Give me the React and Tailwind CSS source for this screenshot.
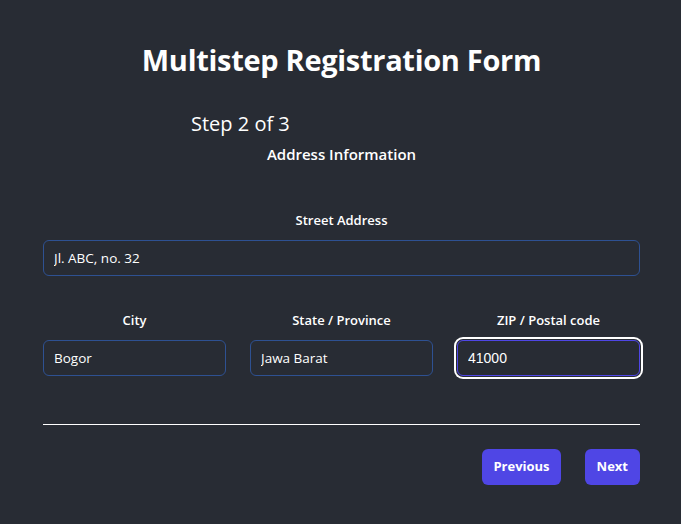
import React, { useState } from "react";

export default function App() {
  const [form, setForm] = useState({
    street: "Jl. ABC, no. 32",
    city: "Bogor",
    state: "Jawa Barat",
    zip: "41000",
  });

  const handleChange = (e) => {
    setForm({ ...form, [e.target.name]: e.target.value });
  };

  return (
    <div
      className="min-h-screen bg-[#282c34] text-white"
      style={{ fontFamily: '"Open Sans", "Noto Sans", sans-serif' }}
    >
      <div className="ml-[43px] mr-[41px] pt-[40px]">
        <h1 className="text-center text-[29px] font-bold leading-[40px] tracking-[-0.3px]">
          Multistep Registration Form
        </h1>

        <div className="mt-[31px] pl-[148px] text-[20px] leading-[26px]">Step 2 of 3</div>
        <h2 className="mt-[7px] text-center text-[15px] font-semibold leading-[20px]">Address Information</h2>

        <div className="mt-[47px]">
          <label className="block text-center text-[13px] font-semibold leading-[18px]">Street Address</label>
          <input
            name="street"
            value={form.street}
            onChange={handleChange}
            className="mt-[11px] block h-[36px] w-full rounded-md border border-[#2e5192] bg-[#282c34] px-[10px] text-[13.5px] text-white outline-none"
          />
        </div>

        <div className="mt-[35px] grid grid-cols-3 gap-[24px]">
          <div>
            <label className="block text-center text-[13px] font-semibold leading-[18px]">City</label>
            <input
              name="city"
              value={form.city}
              onChange={handleChange}
              className="mt-[11px] block h-[36px] w-full rounded-md border border-[#2e5192] bg-[#282c34] px-[10px] text-[13.5px] text-white outline-none"
            />
          </div>
          <div>
            <label className="block text-center text-[13px] font-semibold leading-[18px]">State / Province</label>
            <input
              name="state"
              value={form.state}
              onChange={handleChange}
              className="mt-[11px] block h-[36px] w-full rounded-md border border-[#2e5192] bg-[#282c34] px-[10px] text-[13.5px] text-white outline-none"
            />
          </div>
          <div>
            <label className="block text-center text-[13px] font-semibold leading-[18px]">ZIP / Postal code</label>
            <input
              name="zip"
              value={form.zip}
              onChange={handleChange}
              autoFocus
              className="mt-[11px] block h-[36px] w-full rounded-md border border-[#4f46e5] bg-[#282c34] px-[10px] font-['Liberation_Sans',sans-serif] text-[14px] text-white outline-none ring-2 ring-white ring-offset-1 ring-offset-[#282c34]"
            />
          </div>
        </div>

        <div className="mt-[48px] h-px bg-white" />

        <div className="mt-[24px] flex justify-end gap-[24px]">
          <button className="h-[36px] rounded-md bg-[#4f46e5] px-[11px] text-[13px] font-bold text-white">
            Previous
          </button>
          <button className="h-[36px] rounded-md bg-[#4f46e5] px-[12px] text-[13px] font-bold text-white">
            Next
          </button>
        </div>
      </div>
    </div>
  );
}
